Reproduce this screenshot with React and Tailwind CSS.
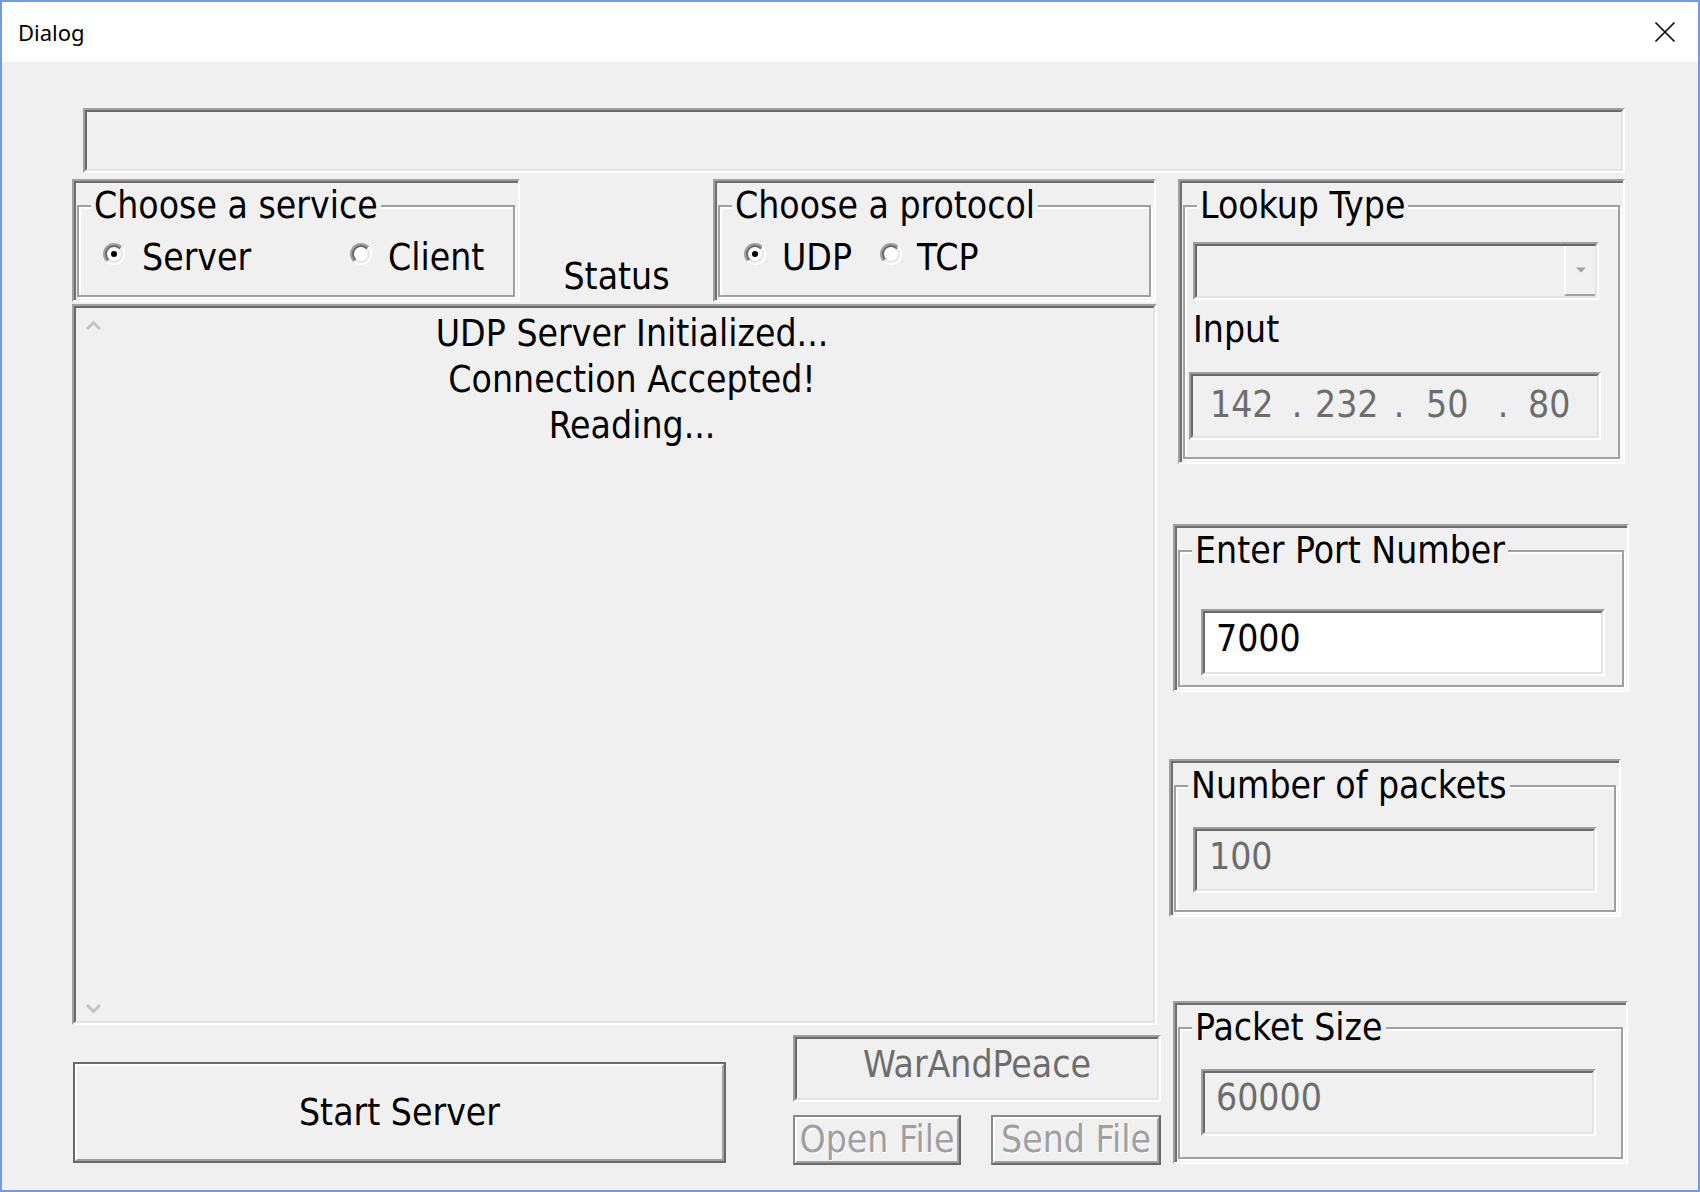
import React from 'react';

const font = "font-['DejaVu_Sans_Condensed','DejaVu_Sans',sans-serif] text-[37px] leading-[44px]";

function Sunken({ className = '', innerClassName = '', children }) {
  return (
    <div className={`border-2 border-t-[#a0a0a0] border-l-[#a0a0a0] border-r-white border-b-white ${className}`}>
      <div className={`h-full w-full border-2 border-t-[#696969] border-l-[#696969] border-r-[#e3e3e3] border-b-[#e3e3e3] ${innerClassName}`}>
        {children}
      </div>
    </div>
  );
}

function Group({ label, className = '', children }) {
  return (
    <div className={`border-2 border-t-[#a0a0a0] border-l-[#a0a0a0] border-r-white border-b-white p-[3px] shadow-[inset_2px_2px_0_#6e6e6e] ${className}`}>
      <fieldset className="h-full border-2 border-[#a0a0a0] shadow-[inset_2px_2px_0_#fff,2px_2px_0_#fff]">
        <legend className="ml-[12px] px-[3px] bg-[#f0f0f0]">{label}</legend>
        {children}
      </fieldset>
    </div>
  );
}

function Radio({ checked }) {
  return (
    <svg width="22" height="22" viewBox="0 0 22 22" className="shrink-0 mt-[7px]">
      <defs>
        <linearGradient id="radio-outer" x1="0" y1="0" x2="1" y2="1">
          <stop offset="0.5" stopColor="#a0a0a0" />
          <stop offset="0.5" stopColor="#ffffff" />
        </linearGradient>
        <linearGradient id="radio-inner" x1="0" y1="0" x2="1" y2="1">
          <stop offset="0.5" stopColor="#696969" />
          <stop offset="0.5" stopColor="#e3e3e3" />
        </linearGradient>
      </defs>
      <circle cx="11" cy="11" r="11" fill="url(#radio-outer)" />
      <circle cx="11" cy="11" r="9" fill="url(#radio-inner)" />
      <circle cx="11" cy="11" r="7" fill="#fff" />
      {checked && <circle cx="11" cy="11" r="3" fill="#000" />}
    </svg>
  );
}

function Option({ checked, label, className = '', gap = 'ml-[16px]' }) {
  return (
    <div className={`flex items-start ${className}`}>
      <Radio checked={checked} />
      <span className={gap}>{label}</span>
    </div>
  );
}

function DisabledButton({ className = '', children }) {
  return (
    <div className={`h-[50px] border-2 border-t-[#8a8a8a] border-l-[#8a8a8a] border-r-[#696969] border-b-[#696969] ${className}`}>
      <div className="h-full border-2 border-t-white border-l-white border-r-[#a0a0a0] border-b-[#a0a0a0] flex items-center justify-center overflow-hidden whitespace-nowrap text-[#a0a0a0] [text-shadow:1px_1px_0_#fff]">
        {children}
      </div>
    </div>
  );
}

export default function App() {
  return (
    <div className={`w-[1700px] h-[1192px] flex flex-col border-2 border-[#6e9ceb] bg-white text-black ${font}`}>
      {/* title bar */}
      <div className="h-[60px] shrink-0 flex items-center justify-between bg-white pl-[16px] pr-[22px]">
        <span className="font-['Noto_Sans',sans-serif] text-[22px] leading-none">Dialog</span>
        <svg width="22" height="22" viewBox="0 0 22 22">
          <path d="M1.5 1.5L20.5 20.5M20.5 1.5L1.5 20.5" stroke="#000" strokeWidth="1.6" />
        </svg>
      </div>

      {/* client area */}
      <div className="flex-1 bg-[#f0f0f0] pl-[70px] pt-[46px]">
        <Sunken className="ml-[11px] w-[1542px] h-[65px]" />

        <div className="flex items-start mt-[6px]">
          {/* left column */}
          <div className="w-[1085px] shrink-0 flex flex-col">
            <div className="flex h-[123px]">
              <Group label="Choose a service" className="w-[448px] shrink-0">
                <div className="flex pt-[8px]">
                  <Option checked label="Server" className="ml-[24px] w-[247px]" gap="ml-[17px]" />
                  <Option label="Client" />
                </div>
              </Group>
              <div className="w-[193px] shrink-0 flex items-end justify-center pb-[3px]">Status</div>
              <Group label="Choose a protocol" className="w-[443px] shrink-0">
                <div className="flex pt-[8px]">
                  <Option checked label="UDP" className="ml-[24px] w-[136px]" />
                  <Option label="TCP" gap="ml-[15px]" />
                </div>
              </Group>
            </div>

            <Sunken className="mt-[2px] h-[721px]" innerClassName="flex">
              <div className="w-[35px] flex flex-col items-center justify-between pt-[12px] pb-[7px]">
                <svg width="15" height="10" viewBox="0 0 15 10">
                  <path d="M1 9L7.5 2.5L14 9" stroke="#c4c4c4" strokeWidth="3" fill="none" />
                </svg>
                <svg width="15" height="10" viewBox="0 0 15 10">
                  <path d="M1 1L7.5 7.5L14 1" stroke="#c4c4c4" strokeWidth="3" fill="none" />
                </svg>
              </div>
              <div className="flex-1 text-center pt-[3px] leading-[46px]">
                <div>UDP Server Initialized...</div>
                <div>Connection Accepted!</div>
                <div>Reading...</div>
              </div>
            </Sunken>

            <div className="flex items-start">
              <div className="shrink-0 ml-[1px] mt-[37px] w-[653px] h-[101px] border-2 border-[#696969]">
                <div className="h-full border-2 border-t-white border-l-white border-r-[#a0a0a0] border-b-[#a0a0a0] flex items-center justify-center">
                  Start Server
                </div>
              </div>
              <div className="shrink-0 ml-[67px] mt-[10px] w-[368px]">
                <Sunken className="h-[67px]" innerClassName="flex items-center justify-center pb-[8px] text-[#6d6d6d]">
                  WarAndPeace
                </Sunken>
                <div className="flex justify-between mt-[13px]">
                  <DisabledButton className="w-[168px]">Open File</DisabledButton>
                  <DisabledButton className="w-[170px]">Send File</DisabledButton>
                </div>
              </div>
            </div>
          </div>

          {/* right column */}
          <div className="ml-[12px] flex flex-col">
            <Group label="Lookup Type" className="ml-[9px] w-[447px] h-[285px]">
              <Sunken className="ml-[8px] mt-[14px] w-[406px] h-[58px]" innerClassName="flex justify-end">
                <div className="w-[31px] h-full border-l-2 border-l-white border-b-2 border-b-[#a0a0a0] flex items-center justify-center">
                  <svg width="12" height="8" viewBox="0 0 12 8">
                    <path d="M1 1.5H11L6 6.5Z" fill="#a0a0a0" />
                  </svg>
                </div>
              </Sunken>
              <div className="ml-[8px] mt-[8px]">Input</div>
              <Sunken className="ml-[4px] mt-[20px] w-[412px] h-[68px]" innerClassName="flex items-center pb-[2px] text-[#6d6d6d]">
                <span className="ml-[17px] w-[60px] text-center">142</span>
                <span className="ml-[21px] w-[12px] text-center">.</span>
                <span className="ml-[12px] w-[60px] text-center">232</span>
                <span className="ml-[18px] w-[12px] text-center">.</span>
                <span className="ml-[21px] w-[40px] text-center">50</span>
                <span className="ml-[31px] w-[12px] text-center">.</span>
                <span className="ml-[19px] w-[42px] text-center">80</span>
              </Sunken>
            </Group>

            <Group label="Enter Port Number" className="ml-[4px] mt-[60px] w-[456px] h-[168px]">
              <Sunken className="ml-[21px] mt-[36px] w-[404px] h-[67px]" innerClassName="flex items-center pl-[11px] pb-[7px] bg-white">
                7000
              </Sunken>
            </Group>

            <Group label="Number of packets" className="mt-[67px] w-[452px] h-[158px]">
              <Sunken className="ml-[17px] mt-[19px] w-[404px] h-[66px]" innerClassName="flex items-center pl-[12px] pb-[6px] text-[#6d6d6d]">
                100
              </Sunken>
            </Group>

            <Group label="Packet Size" className="ml-[4px] mt-[84px] w-[455px] h-[163px]">
              <Sunken className="ml-[21px] mt-[19px] w-[395px] h-[67px]" innerClassName="flex items-center pl-[11px] pb-[9px] text-[#6d6d6d]">
                60000
              </Sunken>
            </Group>
          </div>
        </div>
      </div>
    </div>
  );
}
